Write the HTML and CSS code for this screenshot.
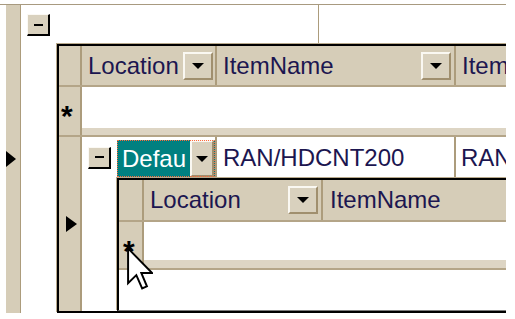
FILE: index.html
```html
<!DOCTYPE html>
<html lang="en">
<head>
    <meta charset="UTF-8">
    <title>Grid</title>
    <link rel="stylesheet" href="styles.css">
</head>
<body>

    <div class="frame">
        <div class="sel sel0"><i class="tri"></i></div>
        <div class="rows0">
            <div class="line0">
                <div class="cell0 first"><span class="exp"></span></div>
                <div class="cell0"></div>
            </div>

            <div class="child child1">
                <div class="hdr">
                    <div class="sel"></div>
                    <div class="hcell w1"><span>Location</span><span class="drop"></span></div>
                    <div class="hcell w2"><span>ItemName</span><span class="drop"></span></div>
                    <div class="hcell"><span>Item</span></div>
                </div>
                <div class="newrow">
                    <div class="sel"><span class="star">*</span></div>
                    <div class="blank"></div>
                </div>
                <div class="band">
                    <div class="sel"></div>
                    <div class="blank"></div>
                </div>
                <div class="datarow">
                    <div class="sel"><i class="tri"></i></div>
                    <div class="rowbody">
                        <div class="dline">
                            <div class="dexp"><span class="exp"></span></div>
                            <div class="dcell focus">
                                <div class="teal"><span>Defau</span><span class="drop"></span></div>
                            </div>
                            <div class="dcell w2">RAN/HDCNT200</div>
                            <div class="dcell">RAN</div>
                        </div>

                        <div class="child child2">
                            <div class="hdr">
                                <div class="sel"></div>
                                <div class="hcell w1"><span>Location</span><span class="drop"></span></div>
                                <div class="hcell"><span>ItemName</span></div>
                            </div>
                            <div class="newrow">
                                <div class="sel"><span class="star">*</span></div>
                                <div class="blank"></div>
                            </div>
                            <div class="band">
                                <div class="sel"></div>
                                <div class="blank"></div>
                            </div>
                            <div class="filler"></div>
                        </div>
                    </div>
                </div>
            </div>
        </div>
    </div>

    <svg class="cursor" width="26" height="44" viewBox="0 0 12 20">
        <path d="M0.5 0.5 L0.5 16.5 L4.3 12.8 L7 19 L9.2 18 L6.6 11.8 L11.5 11.8 Z" fill="#fff" stroke="#000" stroke-width="0.9"/>
    </svg>

</body>
</html>
```

FILE: styles.css
```css
* {
    box-sizing: border-box;
}
body {
    margin: 0;
    background-color: white;
    font-family: "Liberation Sans", Arial, sans-serif;
    font-size: 24px;
    color: #1c1650;
}

.frame {
    display: flex;
    width: 506px;
    height: 309px;
    margin-top: 4px;
    padding-left: 6px;
    border-top: 1px solid #a89a80;
    overflow: hidden;
}

.sel {
    background-color: #d6cdb8;
    flex: none;
}
.sel0 {
    width: 15px;
    border-right: 1px solid #ac9c7c;
    display: flex;
    align-items: center;
}
.tri {
    display: block;
    width: 0;
    height: 0;
    border-left: 10px solid #000;
    border-top: 8px solid transparent;
    border-bottom: 8px solid transparent;
}

.rows0 {
    flex: 1;
    min-width: 0;
    display: flex;
    flex-direction: column;
}
.line0 {
    height: 39px;
    display: flex;
    flex: none;
}
.cell0.first {
    width: 298px;
    border-right: 1px solid #ac9c7c;
    padding: 9px 0 0 6px;
}

.exp {
    display: flex;
    align-items: center;
    justify-content: center;
    width: 23px;
    height: 22px;
    background-color: #d9d1be;
    border-top: 1px solid #fbf9f4;
    border-left: 1px solid #fbf9f4;
    border-right: 2px solid #000;
    border-bottom: 2px solid #000;
}
.exp::after {
    content: "";
    width: 9px;
    height: 2px;
    background-color: #000;
}

/* nested grids */
.child {
    display: flex;
    flex-direction: column;
    flex: none;
    width: 640px;
    border-top: 2px solid #000;
    border-left: 2px solid #000;
    box-shadow: -1px -1px 0 #b8a98c;
}
.child1 {
    height: 269px;
    margin-left: 36px;
    border-bottom: 2px solid #000;
}
.child2 {
    flex: 1;
    margin-left: 35px;
    border-bottom: 1px solid #7c7c7c;
}

.hdr {
    display: flex;
    flex: none;
    height: 41px;
    background-color: #d6cdb8;
    border-bottom: 2px solid #b4a588;
}
.hdr .sel, .newrow .sel, .band .sel, .datarow > .sel {
    width: 23px;
    border-right: 2px solid #ac9c7c;
}
.child2 .sel {
    width: 25px !important;
}
.child2 .hdr {
    height: 42px;
}

.hcell {
    display: flex;
    align-items: center;
    justify-content: space-between;
    padding-left: 6px;
    flex: none;
}
.hcell.w1 {
    width: 135px;
    border-right: 2px solid #ac9c7c;
    padding-right: 2px;
}
.hcell.w2 {
    width: 239px;
    border-right: 2px solid #ac9c7c;
    padding-right: 3px;
}
.child2 .hcell.w1 {
    width: 179px;
    padding-right: 3px;
}
.child2 .hcell:last-child {
    padding-left: 7px;
}

.drop {
    display: flex;
    align-items: center;
    justify-content: center;
    width: 30px;
    height: 28px;
    background-color: #d9d1be;
    border: 2px solid;
    border-color: #faf8f2 #a08f6e #a08f6e #faf8f2;
}
.drop::after {
    content: "";
    border-top: 6px solid #000;
    border-left: 6px solid transparent;
    border-right: 6px solid transparent;
}

.newrow {
    display: flex;
    flex: none;
    height: 41px;
}
.child2 .newrow {
    height: 38px;
}
.star {
    display: block;
    padding: 16px 0 0 2px;
    font-weight: bold;
    font-size: 30px;
    line-height: 26px;
    color: #000;
}
.child2 .star {
    padding-left: 4px;
}

.band {
    display: flex;
    flex: none;
    height: 9px;
    background-color: #ddd5c4;
    border-bottom: 2px solid #b4a588;
}
.child2 .band {
    height: 10px;
}

.datarow {
    display: flex;
    flex: 1;
}
.datarow > .sel {
    display: flex;
    align-items: center;
    padding-left: 7px;
}
.datarow > .sel .tri {
    border-left-width: 11px;
}

.rowbody {
    flex: 1;
    display: flex;
    flex-direction: column;
}
.dline {
    display: flex;
    flex: none;
    height: 41px;
}
.dexp {
    width: 35px;
    padding-left: 6px;
    display: flex;
    align-items: center;
}
.dcell {
    display: flex;
    align-items: center;
    flex: none;
    padding-left: 5px;
}
.dcell.focus {
    width: 100px;
    padding: 3px 0 1px 0;
    border-right: 2px solid #ac9c7c;
    align-items: stretch;
}
.teal {
    flex: 1;
    display: flex;
    align-items: center;
    justify-content: space-between;
    padding-left: 5px;
    background-color: #008080;
    color: #fff;
    outline: 1px dotted #ff6a3c;
    outline-offset: -1px;
}
.teal .drop {
    width: 24px;
    height: 100%;
    margin-right: 1px;
}
.dcell.w2 {
    width: 239px;
    padding-left: 6px;
    border-right: 2px solid #ac9c7c;
}

.blank {
    flex: 1;
}
.filler {
    flex: 1;
}

.cursor {
    position: absolute;
    left: 127px;
    top: 247px;
}
```
